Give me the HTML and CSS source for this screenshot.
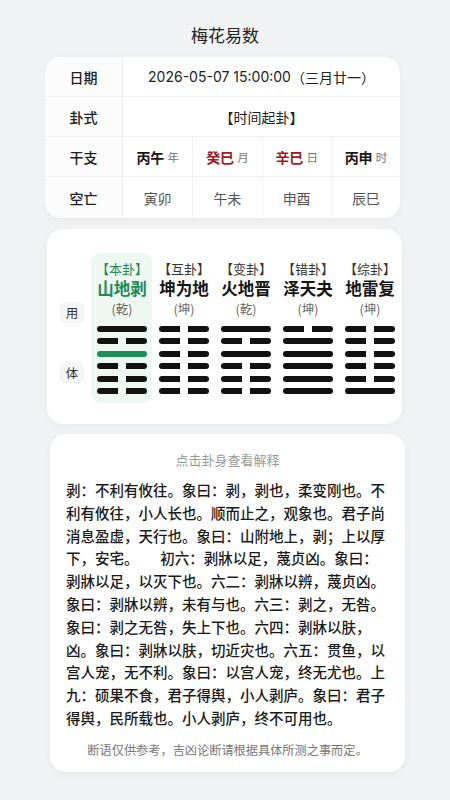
FILE: index.html
```html
<!DOCTYPE html>
<html lang="zh-CN">
<head>
<meta charset="utf-8">
<title>梅花易数</title>
<link rel="stylesheet" href="styles.css">
</head>
<body>
<div class="page">
  <h1 class="title">梅花易数</h1>

  <section class="card info">
    <div class="lbl">日期</div>
    <div class="val span4 date">2026-05-07 15:00:00<span class="cjk">（三月廿一）</span></div>
    <div class="lbl">卦式</div>
    <div class="val span4">【时间起卦】</div>
    <div class="lbl">干支</div>
    <div class="val gz"><b>丙午</b><small>年</small></div>
    <div class="val gz"><b class="red">癸巳</b><small>月</small></div>
    <div class="val gz"><b class="red">辛巳</b><small>日</small></div>
    <div class="val gz"><b>丙申</b><small>时</small></div>
    <div class="lbl last">空亡</div>
    <div class="val ky last">寅卯</div>
    <div class="val ky last">午未</div>
    <div class="val ky last">申酉</div>
    <div class="val ky last">辰巳</div>
  </section>

  <section class="card hexcard">
    <div class="side">
      <span class="tag">用</span>
      <span class="tag">体</span>
    </div>
    <div class="hexes">
      <div class="hex main">
        <div class="kind">【本卦】</div>
        <div class="name">山地剥</div>
        <div class="palace">(乾)</div>
        <div class="lines">
          <i class="yang"></i><i class="yin"></i><i class="yang move"></i><i class="yin"></i><i class="yin"></i><i class="yin"></i>
        </div>
      </div>
      <div class="hex">
        <div class="kind">【互卦】</div>
        <div class="name">坤为地</div>
        <div class="palace">(坤)</div>
        <div class="lines">
          <i class="yin"></i><i class="yin"></i><i class="yin"></i><i class="yin"></i><i class="yin"></i><i class="yin"></i>
        </div>
      </div>
      <div class="hex">
        <div class="kind">【变卦】</div>
        <div class="name">火地晋</div>
        <div class="palace">(乾)</div>
        <div class="lines">
          <i class="yang"></i><i class="yin"></i><i class="yang"></i><i class="yin"></i><i class="yin"></i><i class="yin"></i>
        </div>
      </div>
      <div class="hex">
        <div class="kind">【错卦】</div>
        <div class="name">泽天夬</div>
        <div class="palace">(坤)</div>
        <div class="lines">
          <i class="yin"></i><i class="yang"></i><i class="yang"></i><i class="yang"></i><i class="yang"></i><i class="yang"></i>
        </div>
      </div>
      <div class="hex">
        <div class="kind">【综卦】</div>
        <div class="name">地雷复</div>
        <div class="palace">(坤)</div>
        <div class="lines">
          <i class="yin"></i><i class="yin"></i><i class="yin"></i><i class="yin"></i><i class="yin"></i><i class="yang"></i>
        </div>
      </div>
    </div>
  </section>

  <section class="card textcard">
    <div class="hint">点击卦身查看解释</div>
    <p class="body">剥：不利有攸往。象曰：剥，剥也，柔变刚也。不利有攸往，小人长也。顺而止之，观象也。君子尚消息盈虚，天行也。象曰：山附地上，剥；上以厚下，安宅。　　初六：剥牀以足，蔑贞凶。象曰：剥牀以足，以灭下也。六二：剥牀以辨，蔑贞凶。象曰：剥牀以辨，未有与也。六三：剥之，无咎。象曰：剥之无咎，失上下也。六四：剥牀以肤，凶。象曰：剥牀以肤，切近灾也。六五：贯鱼，以宫人宠，无不利。象曰：以宫人宠，终无尤也。上九：硕果不食，君子得舆，小人剥庐。象曰：君子得舆，民所载也。小人剥庐，终不可用也。</p>
    <div class="note">断语仅供参考，吉凶论断请根据具体所测之事而定。</div>
  </section>
</div>
</body>
</html>
```

FILE: styles.css
```css
* { box-sizing: border-box; }
html, body {
  margin: 0;
  padding: 0;
  background: #f1f2f4;
}
body {
  font-family: "Noto Sans CJK SC", "Noto Sans", sans-serif;
  color: #1c1c1c;
  width: 450px;
  min-height: 800px;
}
.page {
  padding: 23px 0 20px;
  display: flex;
  flex-direction: column;
}
.title {
  margin: 0;
  text-align: center;
  font-size: 17px;
  line-height: 24px;
  font-weight: 400;
  color: #222;
}
.card {
  background: #fff;
  border-radius: 16px;
  box-shadow: 0 2px 8px rgba(0, 0, 0, 0.04);
  width: 355px;
}

/* info table */
.info {
  margin: 10px 0 0 45px;
  display: grid;
  grid-template-columns: 78px repeat(4, 1fr);
  overflow: hidden;
}
.lbl, .val {
  height: 40px;
  display: flex;
  align-items: center;
  justify-content: center;
  border-bottom: 1px solid #f0f0f0;
}
.last { border-bottom: none; height: 41px; }
.lbl {
  font-size: 14px;
  font-weight: 500;
  color: #222;
  border-right: 1px solid #f0f0f0;
  background: #fcfcfc;
}
.val {
  font-size: 14px;
  color: #222;
}
.val + .val { border-left: 1px solid #f3f3f3; }
.lbl + .val { border-left: none; }
.span4 { grid-column: span 4; }
.date {
  font-family: Inter, "Noto Sans CJK SC", sans-serif;
  font-size: 14px;
  color: #222;
}
.date .cjk { font-family: "Noto Sans CJK SC", sans-serif; }
.gz b {
  font-size: 14px;
  font-weight: 700;
  color: #161616;
}
.gz b.red { color: #9d1b26; }
.gz small {
  font-size: 11.5px;
  color: #777;
  margin-left: 3px;
}
.ky { color: #555; }

/* hexagram card */
.hexcard {
  margin: 11px 0 0 47px;
  padding: 24px 1px 21px 14px;
  display: flex;
  gap: 8px;
}
.side {
  width: 22px;
  padding-top: 50px;
  display: flex;
  flex-direction: column;
  gap: 41px;
}
.tag {
  width: 22px;
  height: 19px;
  border-radius: 5px;
  background: #f6f6f7;
  box-shadow: 0 0 0 1px #f0f0f1;
  font-size: 12.5px;
  color: #333;
  display: flex;
  align-items: center;
  justify-content: center;
}
.hexes {
  display: grid;
  grid-template-columns: repeat(5, 61px);
  column-gap: 1px;
}
.hex {
  padding: 8px 5px 9px 6px;
  border-radius: 9px;
  display: flex;
  flex-direction: column;
  align-items: center;
}
.hex.main { background: #eef7f1; }
.kind {
  font-size: 13px;
  line-height: 16px;
  color: #333;
  white-space: nowrap;
}
.name {
  font-size: 16.5px;
  line-height: 23px;
  font-weight: 700;
  color: #151515;
  white-space: nowrap;
}
.palace {
  font-size: 12.5px;
  line-height: 17px;
  color: #666;
}
.main .kind, .main .name { color: #1d8a57; }
.lines {
  margin-top: 9px;
  width: 50px;
  display: flex;
  flex-direction: column;
  gap: 6.4px;
}
.lines i {
  display: flex;
  justify-content: space-between;
  height: 6px;
}
.lines i.yang {
  background: #111;
  border-radius: 3px;
}
.lines i.yang.move { background: #1f8c5b; }
.lines i.yin {
  background: linear-gradient(#111, #111) left / 21px 6px no-repeat,
              linear-gradient(#111, #111) right / 21px 6px no-repeat;
  border-radius: 3px;
}

/* text card */
.textcard {
  margin: 10px 0 0 50px;
  padding: 17px 16px 13px;
}
.hint {
  text-align: center;
  font-size: 13px;
  line-height: 18px;
  color: #9a9a9a;
}
.body {
  margin: 10px 0 0;
  font-size: 14.5px;
  line-height: 22.8px;
  font-weight: 500;
  color: #1a1a1a;
}
.note {
  margin-top: 11px;
  text-align: center;
  font-size: 12.2px;
  line-height: 18px;
  color: #777;
}
```
